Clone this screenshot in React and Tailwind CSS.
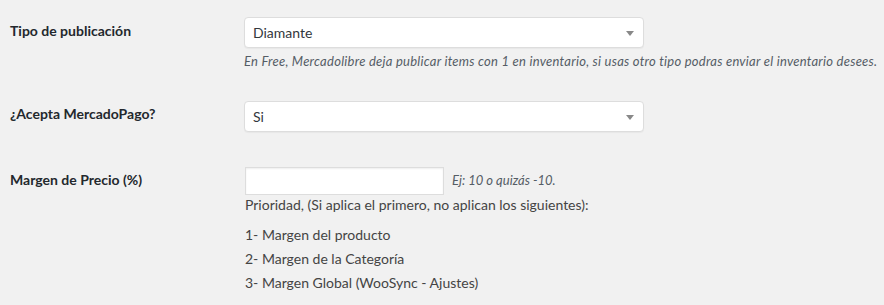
function Select({value}) {
  return (
    <div className="relative w-[400px] h-[31px] bg-white border border-[#dddddd] rounded-[4px] shadow-[0_1px_1px_rgba(0,0,0,0.04)] flex items-center pl-[8px] text-[14px] text-[#32373c]">
      <span>{value}</span>
      <span className="absolute right-[9px] top-[13px] w-0 h-0 border-l-[4px] border-r-[4px] border-t-[5px] border-l-transparent border-r-transparent border-t-[#888888]"></span>
    </div>
  );
}

export default function App() {
  return (
    <div className="w-[884px] h-[305px] bg-[#f1f1f1] text-[#23282d] overflow-hidden font-['Lato','Open_Sans',sans-serif] text-[14px]">

      {/* Tipo de publicación */}
      <div className="flex pt-[17px]">
        <div className="w-[244px] pl-[10px] pt-[4px] font-bold leading-[20px]">Tipo de publicación</div>
        <div>
          <Select value="Diamante"/>
          <p className="mt-[4px] italic text-[13px] leading-[18px] tracking-[0.25px] text-[#555d66] whitespace-nowrap">
            En Free, Mercadolibre deja publicar items con 1 en inventario, si usas otro tipo podras enviar el inventario desees.
          </p>
        </div>
      </div>

      {/* MercadoPago */}
      <div className="flex pt-[31px]">
        <div className="w-[244px] pl-[10px] pt-[3px] font-bold leading-[20px]">¿Acepta MercadoPago?</div>
        <Select value="Si"/>
      </div>

      {/* Margen */}
      <div className="flex pt-[35px]">
        <div className="w-[244px] pl-[10px] pt-[3px] font-bold leading-[20px]">Margen de Precio (%)</div>
        <div className="pl-[1px]">
          <div className="flex items-center gap-[8px]">
            <input className="w-[199px] h-[28px] bg-white border border-[#dddddd] shadow-[inset_0_1px_2px_rgba(0,0,0,0.07)] outline-none"/>
            <span className="italic text-[13px] text-[#555d66]">Ej: 10 o quizás -10.</span>
          </div>
          <p className="mt-[0px] leading-[20px] text-[#444444]">Prioridad, (Si aplica el primero, no aplican los siguientes):</p>
          <div className="mt-[10px] flex flex-col gap-[4px] leading-[20px] text-[#444444]">
            <span>1- Margen del producto</span>
            <span>2- Margen de la Categoría</span>
            <span>3- Margen Global (WooSync - Ajustes)</span>
          </div>
        </div>
      </div>
    </div>
  );
}
